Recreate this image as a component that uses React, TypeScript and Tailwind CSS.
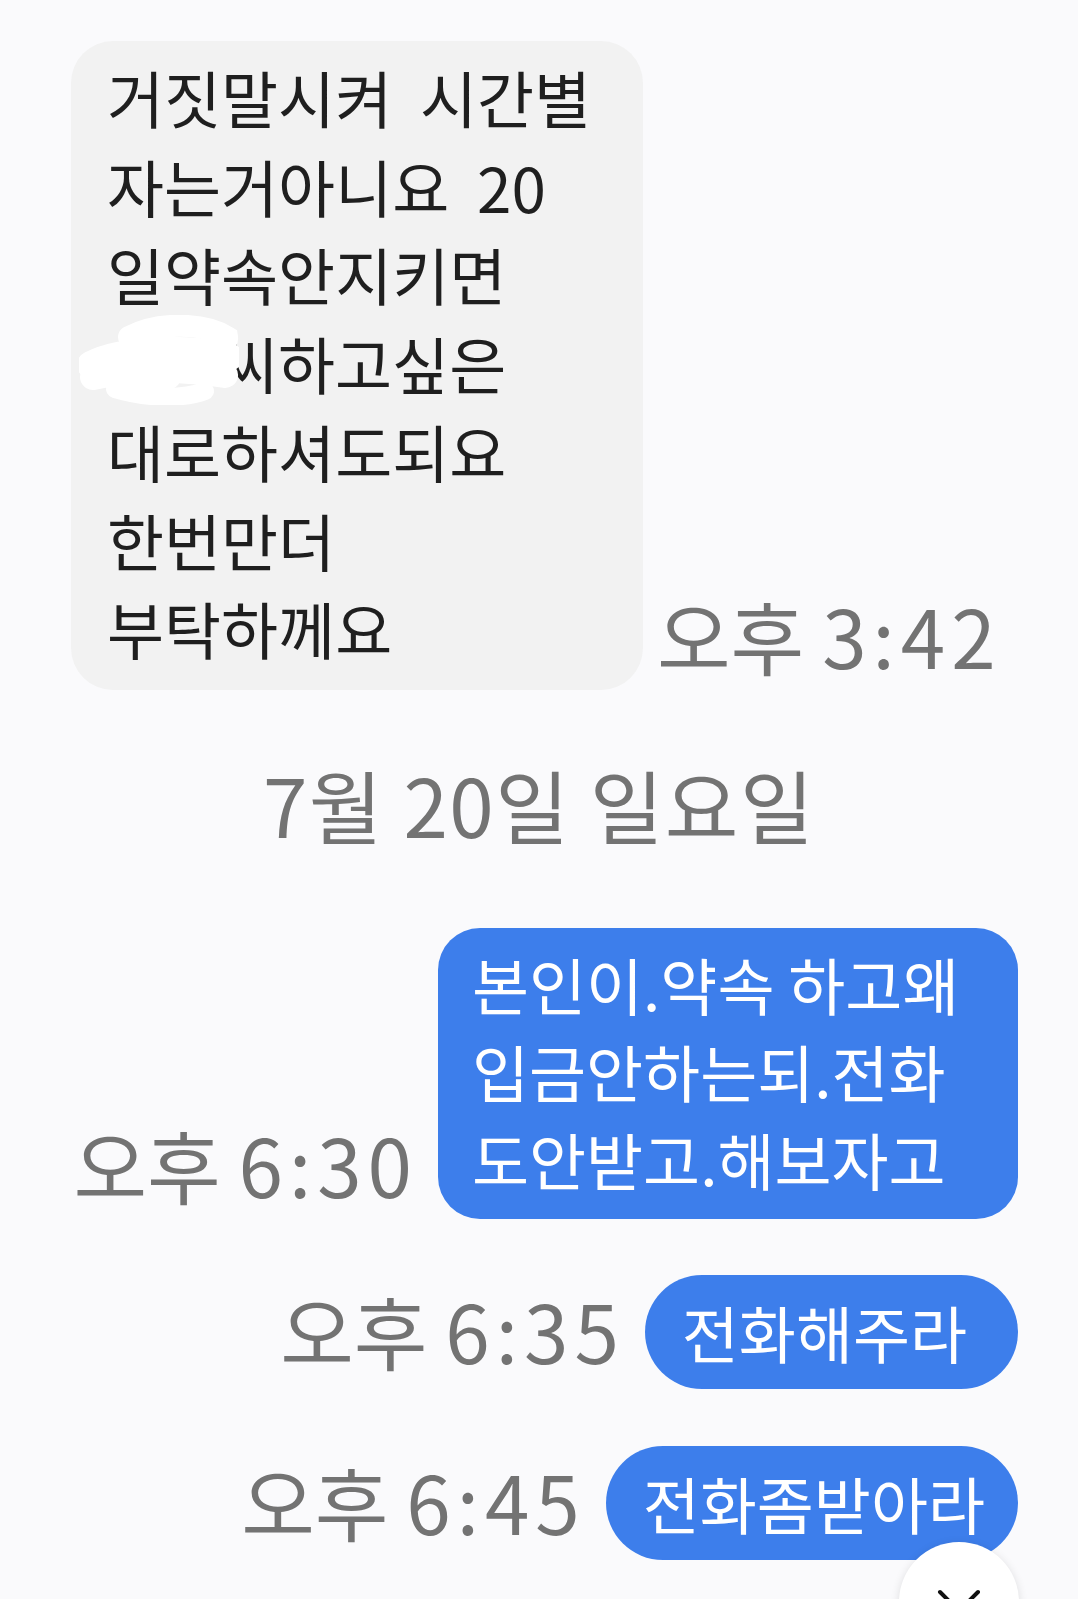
import React from 'react';

const font = { fontFamily: '"Noto Sans CJK KR", "Noto Sans", sans-serif' };

type Line = string | { hidden: number; rest: string };

const incoming: Line[] = [
    '거짓말시켜  시간별',
    '자는거아니요  20',
    '일약속안지키면',
    { hidden: 2, rest: '씨하고싶은' },
    '대로하셔도되요',
    '한번만더',
    '부탁하께요',
];

// white marker scribble over a name
const Scribble = () => (
    <svg className="absolute left-[-28px] top-[-4px]" width="160" height="90" viewBox="0 0 160 90" fill="none">
        <path d="M50 22 C80 6 126 8 148 22 C150 34 118 38 90 34" stroke="#ffffff" strokeWidth="22" strokeLinecap="round" />
        <path d="M12 50 C44 34 104 32 150 42" stroke="#ffffff" strokeWidth="28" strokeLinecap="round" />
        <path d="M14 62 C60 52 110 54 146 60" stroke="#ffffff" strokeWidth="26" strokeLinecap="round" />
        <path d="M36 74 C70 84 104 84 126 76" stroke="#ffffff" strokeWidth="18" strokeLinecap="round" />
        <path d="M30 44 C40 60 60 70 90 62" stroke="#ffffff" strokeWidth="24" strokeLinecap="round" />
    </svg>
);

const Time = ({ prefix, digits }: { prefix: string; digits: string }) => (
    <span className="shrink-0 text-[80px] leading-[100px] mb-[6px] text-[#737373] whitespace-pre">
        {prefix}
        <span className="tracking-[6px]">{digits}</span>
    </span>
);

const Pill = ({ text, extra = 'pr-[33px]' }: { text: string; extra?: string }) => (
    <div className={`h-[114px] flex items-center pl-[37px] rounded-full bg-[#3d7eeb] text-white text-[62px] leading-none whitespace-pre ${extra}`}>
        {text}
    </div>
);

export default function App() {
    return (
        <div style={font} className="relative h-[1599px] w-full overflow-hidden bg-[#fafafc] flex flex-col pt-[41px] pl-[71px] pr-[60px]">
            {/* received message */}
            <div className="flex items-end gap-[14px]">
                <div className="w-[572px] rounded-[42px] bg-[#f2f2f2] pl-[36px] pt-[12px] pb-[17px] text-[62px] leading-[88.5px] text-[#1f1f1f]">
                    {incoming.map((line, i) =>
                        typeof line === 'string' ? (
                            <div key={i} className="whitespace-pre">{line}</div>
                        ) : (
                            <div key={i} className="whitespace-pre flex">
                                <span className="relative inline-block w-[114px]">
                                    <Scribble />
                                </span>
                                {line.rest}
                            </div>
                        )
                    )}
                </div>
                <Time prefix="오후 " digits="3:42" />
            </div>

            {/* date divider */}
            <div className="mt-[63px] mb-[75px] -ml-[71px] -mr-[60px] text-center text-[80px] leading-[100px] tracking-[1.5px] text-[#737373]">
                7월 20일 일요일
            </div>

            {/* sent messages */}
            <div className="flex items-end justify-end gap-[20px]">
                <Time prefix="오후 " digits="6:30" />
                <div className="w-[580px] rounded-[42px] bg-[#3d7eeb] pl-[34px] pt-[13px] pb-[16px] text-[62px] leading-[87.5px] text-white">
                    <div className="whitespace-pre">본인이.약속 하고왜</div>
                    <div className="whitespace-pre">입금안하는되.전화</div>
                    <div className="whitespace-pre">도안받고.해보자고</div>
                </div>
            </div>

            <div className="mt-[56px] flex items-center justify-end gap-[20px]">
                <Time prefix="오후 " digits="6:35" />
                <Pill text="전화해주라" extra="pr-[51px]" />
            </div>

            <div className="mt-[57px] flex items-center justify-end gap-[20px]">
                <Time prefix="오후 " digits="6:45" />
                <Pill text="전화좀받아라" />
            </div>

            {/* scroll to bottom */}
            <button className="absolute left-[899px] top-[1542px] w-[120px] h-[120px] rounded-full bg-white shadow-[0_2px_10px_rgba(0,0,0,0.12)] flex items-center justify-center">
                <svg width="44" height="26" viewBox="0 0 44 26" fill="none">
                    <path d="M3 3 L22 22 L41 3" stroke="#111111" strokeWidth="4" strokeLinecap="round" strokeLinejoin="round" />
                </svg>
            </button>
        </div>
    );
}
